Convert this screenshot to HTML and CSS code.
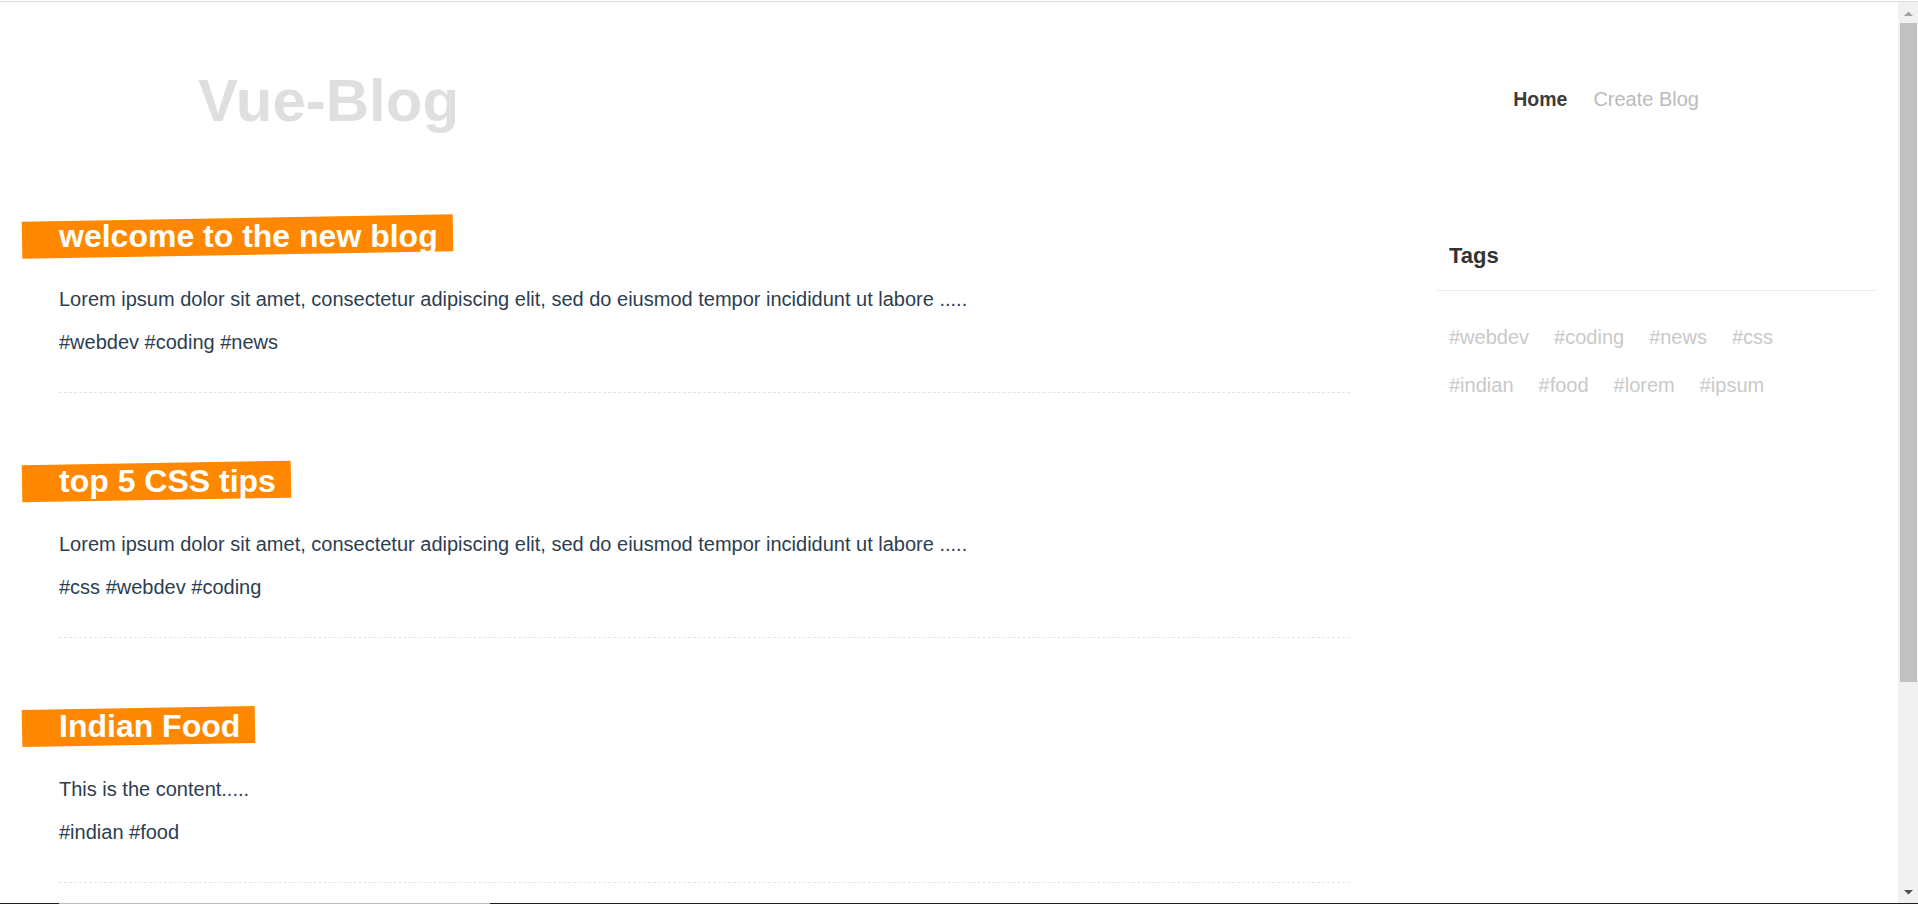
FILE: index.html
```html
<!DOCTYPE html>
<html lang="en">
<head>
<meta charset="utf-8">
<title>Vue-Blog</title>
<link rel="stylesheet" href="styles.css">
</head>
<body>
<div class="frame">
  <div class="window">
    <div class="scroller">
      <header class="site-header">
        <h1 class="logo">Vue-Blog</h1>
        <nav class="nav">
          <a class="nav-link active" href="#">Home</a>
          <a class="nav-link" href="#">Create Blog</a>
        </nav>
      </header>
      <div class="main">
        <section class="posts">
          <article class="post">
            <h2 class="post-title">welcome to the new blog</h2>
            <p class="post-body">Lorem ipsum dolor sit amet, consectetur adipiscing elit, sed do eiusmod tempor incididunt ut labore .....</p>
            <p class="post-tags">#webdev #coding #news</p>
          </article>
          <article class="post">
            <h2 class="post-title">top 5 CSS tips</h2>
            <p class="post-body">Lorem ipsum dolor sit amet, consectetur adipiscing elit, sed do eiusmod tempor incididunt ut labore .....</p>
            <p class="post-tags">#css #webdev #coding</p>
          </article>
          <article class="post">
            <h2 class="post-title">Indian Food</h2>
            <p class="post-body">This is the content.....</p>
            <p class="post-tags">#indian #food</p>
          </article>
        </section>
        <aside class="sidebar">
          <h3 class="sidebar-title">Tags</h3>
          <div class="tag-list">
            <span class="tag">#webdev</span>
            <span class="tag">#coding</span>
            <span class="tag">#news</span>
            <span class="tag">#css</span>
            <span class="tag">#indian</span>
            <span class="tag">#food</span>
            <span class="tag">#lorem</span>
            <span class="tag">#ipsum</span>
          </div>
        </aside>
      </div>
    </div>
    <div class="scrollbar">
      <div class="sb-button sb-up">
        <svg width="20" height="21" viewBox="0 0 20 21"><path d="M6 14h9l-4.5-4.5z" fill="#a3a3a3"/></svg>
      </div>
      <div class="sb-thumb"></div>
      <div class="sb-track"></div>
      <div class="sb-button sb-down">
        <svg width="20" height="21" viewBox="0 0 20 21"><path d="M6 8h9l-4.5 4.5z" fill="#505050"/></svg>
      </div>
    </div>
  </div>
  <div class="bottom-strip"><span class="strip-seg"></span></div>
</div>
</body>
</html>
```

FILE: styles.css
```css
html, body {
  margin: 0;
  height: 100%;
  overflow: hidden;
}

body {
  font-family: "Liberation Sans", Arial, Helvetica, sans-serif;
  color: #2c3e50;
  background: #fff;
}

.frame {
  height: 904px;
  padding-top: 1px;
  box-sizing: border-box;
  display: flex;
  flex-direction: column;
}

.window {
  flex: 1;
  min-height: 0;
  display: flex;
  border-top: 1px solid #dcdcdc;
}

.scroller {
  flex: 1;
  min-width: 0;
  overflow: hidden;
}

/* scrollbar drawing */
.scrollbar {
  width: 20px;
  flex: none;
  display: flex;
  flex-direction: column;
  background: #f1f1f1;
}

.sb-button {
  height: 21px;
  flex: none;
}

.sb-button svg {
  display: block;
}

.sb-thumb {
  height: 659px;
  flex: none;
  margin: 0 1px 0 2px;
  background: #c1c1c1;
}

.sb-track {
  flex: 1;
}

.bottom-strip {
  height: 1px;
  flex: none;
  display: flex;
  background: #1e1e1e;
}

.strip-seg {
  margin-left: 59px;
  width: 431px;
  background: #bdbdbd;
}

/* header */
.site-header {
  display: flex;
  justify-content: space-between;
  align-items: flex-start;
  padding: 64px 199px 0 198px;
}

.logo {
  margin: 0;
  font-size: 60px;
  line-height: 69px;
  font-weight: 700;
  color: #dfdfdf;
}

.nav {
  display: flex;
  gap: 26px;
  padding-top: 22px;
}

.nav-link {
  font-size: 20px;
  line-height: 23px;
  color: #bbbbbb;
  text-decoration: none;
}

.nav-link.active {
  font-weight: 700;
  font-size: 19.5px;
  color: #3b3b3b;
}

/* main */
.main {
  display: flex;
  align-items: flex-start;
  margin-top: 83px;
}

.posts {
  width: 1291px;
  margin-left: 59px;
}

.post {
  display: flex;
  flex-direction: column;
  align-items: flex-start;
  padding-bottom: 38px;
  border-bottom: 1px dashed #e4e4e4;
  margin-bottom: 70px;
}

.post-title {
  position: relative;
  z-index: 0;
  margin: 0 0 33px;
  font-size: 32px;
  line-height: 37px;
  font-weight: 700;
  color: #fff;
}

.post-title::before {
  content: "";
  position: absolute;
  top: 0;
  bottom: 0;
  left: -37px;
  right: -15px;
  background: #ff8800;
  transform: rotate(-1deg);
  z-index: -1;
}

.post-body,
.post-tags {
  margin: 0;
  font-size: 20px;
  line-height: 23px;
}

.post-body {
  margin-bottom: 20px;
}

/* sidebar */
.sidebar {
  width: 439px;
  margin-left: 87px;
}

.sidebar-title {
  margin: 25px 0 0;
  padding: 0 12px 22px;
  font-size: 22px;
  line-height: 25px;
  font-weight: 700;
  color: #333;
  border-bottom: 1px solid #ececec;
}

.tag-list {
  display: flex;
  flex-wrap: wrap;
  padding: 35px 12px 0;
}

.tag {
  margin: 0 25px 25px 0;
  font-size: 20px;
  line-height: 23px;
  color: #c9c9c9;
}
```
